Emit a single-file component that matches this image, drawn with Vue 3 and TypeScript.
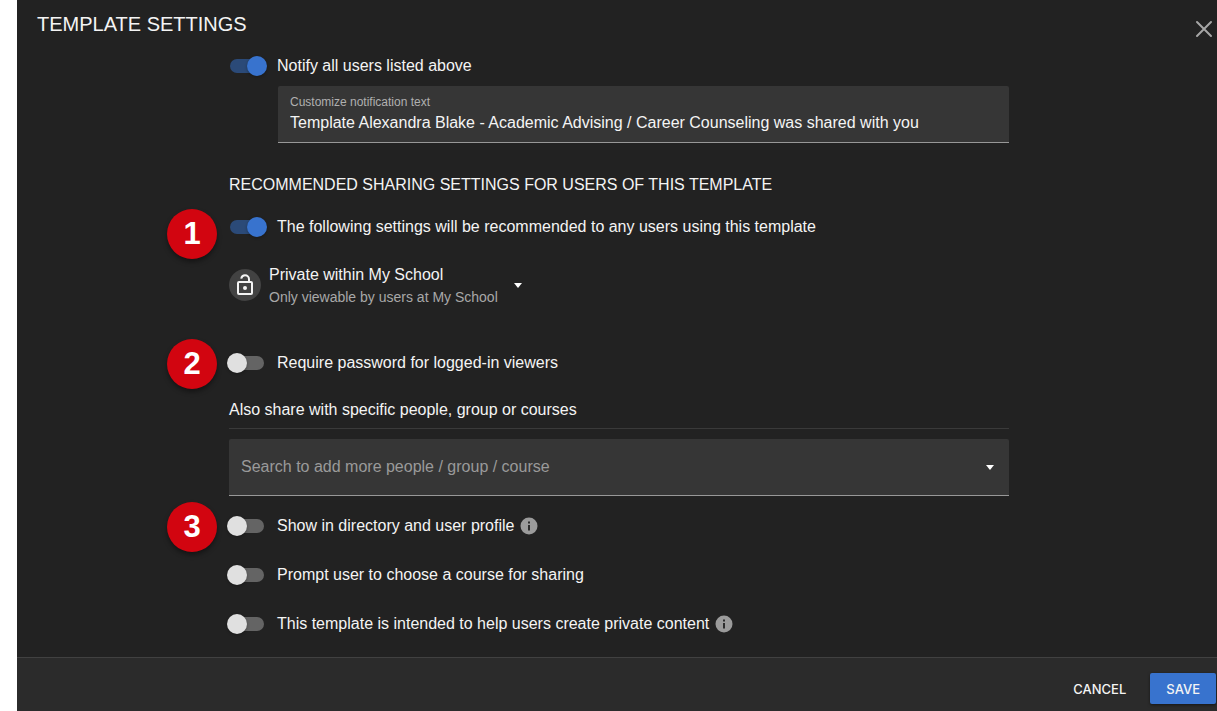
<script setup lang="ts">
import { ref } from 'vue'

interface Option {
  id: string
  label: string
  on: boolean
  hint?: string
  marker?: string
}

const notify = ref(true)
const notificationText = ref(
  'Template Alexandra Blake - Academic Advising / Career Counseling was shared with you',
)
const recommend = ref(true)
const requirePassword = ref(false)
const search = ref('')

const options = ref<Option[]>([
  { id: 'directory', label: 'Show in directory and user profile', on: false, hint: 'About directory visibility', marker: '3' },
  { id: 'prompt', label: 'Prompt user to choose a course for sharing', on: false },
  { id: 'private', label: 'This template is intended to help users create private content', on: false, hint: 'About private content' },
])
</script>

<template>
  <div class="page">
    <section class="dialog" role="dialog" aria-labelledby="dialog-title">
      <header class="header">
        <h1 id="dialog-title" class="title">TEMPLATE SETTINGS</h1>
        <button class="close" type="button" aria-label="Close">
          <svg width="18" height="18" viewBox="0 0 18 18" aria-hidden="true">
            <path d="M2 2l14 14M16 2L2 16" fill="none" stroke="currentColor" stroke-width="2" stroke-linecap="round" />
          </svg>
        </button>
      </header>

      <main class="content">
        <div class="row">
          <input id="notify" v-model="notify" class="switch" type="checkbox" />
          <label for="notify">Notify all users listed above</label>
        </div>
        <div class="field field-nested">
          <label class="field-label" for="notification-text">Customize notification text</label>
          <input id="notification-text" v-model="notificationText" class="field-input" type="text" />
        </div>

        <h2 class="heading">RECOMMENDED SHARING SETTINGS FOR USERS OF THIS TEMPLATE</h2>
        <div class="row">
          <span class="marker marker-low">1</span>
          <input id="recommend" v-model="recommend" class="switch" type="checkbox" />
          <label for="recommend">The following settings will be recommended to any users using this template</label>
        </div>

        <button class="privacy" type="button" aria-haspopup="menu">
          <span class="privacy-icon">
            <svg width="24" height="24" viewBox="0 0 24 24" aria-hidden="true">
              <rect x="5" y="9" width="14" height="12" rx="1" fill="none" stroke="currentColor" stroke-width="2" />
              <path d="M8.2 5.6C8.6 3.6 10 2.2 12 2.2c2.3 0 4 1.7 4 4V9" fill="none" stroke="currentColor" stroke-width="2" />
              <circle cx="12" cy="15" r="2" fill="currentColor" />
            </svg>
          </span>
          <span class="privacy-text">
            <span class="privacy-name">Private within My School</span>
            <span class="privacy-note">Only viewable by users at My School</span>
          </span>
          <svg class="arrow" width="10" height="5" viewBox="0 0 10 5" aria-hidden="true">
            <path d="M1 0h8L5 5z" fill="currentColor" />
          </svg>
        </button>

        <div class="row">
          <span class="marker">2</span>
          <input id="password" v-model="requirePassword" class="switch" type="checkbox" />
          <label for="password">Require password for logged-in viewers</label>
        </div>

        <label class="share-label" for="share-search">Also share with specific people, group or courses</label>
        <div class="field field-search">
          <input
            id="share-search"
            v-model="search"
            class="field-input"
            type="text"
            role="combobox"
            aria-expanded="false"
            placeholder="Search to add more people / group / course"
          />
          <button class="open" type="button" aria-label="Open list">
            <svg class="arrow" width="10" height="5" viewBox="0 0 10 5" aria-hidden="true">
              <path d="M1 0h8L5 5z" fill="currentColor" />
            </svg>
          </button>
        </div>

        <div class="options">
          <div v-for="option in options" :key="option.id" class="row">
            <span v-if="option.marker" class="marker">{{ option.marker }}</span>
            <input :id="option.id" v-model="option.on" class="switch" type="checkbox" />
            <label :for="option.id">{{ option.label }}</label>
            <button v-if="option.hint" class="hint" type="button" :aria-label="option.hint">
              <svg width="18" height="18" viewBox="0 0 18 18" aria-hidden="true">
                <circle cx="9" cy="9" r="8.5" fill="#9b9b9b" />
                <path d="M8 4.6h2v2H8zM8 8h2v5.4H8z" fill="#2c2c2c" />
              </svg>
            </button>
          </div>
        </div>
      </main>

      <footer class="footer">
        <button class="button" type="button">CANCEL</button>
        <button class="button button-primary" type="button">SAVE</button>
      </footer>
    </section>
  </div>
</template>

<style>
body {
  margin: 0;
  background: #fff;
}
</style>

<style scoped>
.page {
  box-sizing: border-box;
  min-height: 100vh;
  padding-left: 17px;
  display: flex;
  font-family: "Helvetica Neue", "Liberation Sans", Arial, sans-serif;
  font-size: 16px;
  line-height: 24px;
  color: #f4f4f4;
}

.page button,
.page input {
  font-family: inherit;
  color: inherit;
}

.page button {
  border: 0;
  background: none;
  padding: 0;
  cursor: pointer;
}

.dialog {
  flex: 1;
  min-width: 0;
  display: flex;
  flex-direction: column;
  background: #222;
}

.header {
  display: flex;
  justify-content: space-between;
  align-items: flex-start;
  padding: 12px 4px 0 20px;
}

.title {
  margin: 0;
  font-size: 20px;
  line-height: 24px;
  font-weight: 400;
}

.page .close {
  display: flex;
  margin-top: 8px;
  color: #a6a6a6;
}

.content {
  flex: 1;
  box-sizing: border-box;
  width: 100%;
  max-width: 784px;
  margin: 0 auto;
  padding: 14px 0 10px 4px;
}

.row {
  position: relative;
  display: flex;
  align-items: center;
  height: 28px;
}

.switch {
  appearance: none;
  position: relative;
  flex: none;
  width: 34px;
  height: 14px;
  margin: 0 13px 0 1px;
  border-radius: 7px;
  background: #646464;
  cursor: pointer;
}

.switch::before {
  content: "";
  position: absolute;
  top: -3px;
  left: -3px;
  width: 20px;
  height: 20px;
  border-radius: 50%;
  background: #e0e0e0;
  box-shadow: 0 1px 3px rgba(0, 0, 0, 0.3);
}

.switch:checked {
  background: #2b4a78;
}

.switch:checked::before {
  left: 17px;
  background: #3873ce;
}

.marker {
  position: absolute;
  top: -10px;
  left: -62px;
  width: 50px;
  height: 50px;
  border-radius: 50%;
  background: #d20510;
  box-shadow: 0 3px 5px rgba(0, 0, 0, 0.4);
  color: #fff;
  font-size: 31px;
  line-height: 50px;
  font-weight: 700;
  text-align: center;
}

.marker-low {
  top: -4px;
}

.field {
  box-sizing: border-box;
  height: 57px;
  background: #363636;
  border-bottom: 1px solid #989898;
  border-radius: 2px 2px 0 0;
}

.field-nested {
  margin: 6px 0 0 49px;
  padding: 7px 12px;
}

.field-label {
  display: block;
  font-size: 12px;
  line-height: 18px;
  color: #b0b0b0;
}

.field-input {
  box-sizing: border-box;
  display: block;
  width: 100%;
  height: 24px;
  padding: 0;
  border: 0;
  outline: 0;
  background: none;
  font-size: 16px;
}

.field-input::placeholder {
  color: #9a9a9a;
  opacity: 1;
}

.heading {
  margin: 30px 0 16px;
  font-size: 16px;
  line-height: 24px;
  font-weight: 400;
}

.privacy {
  display: flex;
  align-items: center;
  margin: 22px 0 42px;
  text-align: left;
}

.privacy-icon {
  display: grid;
  place-items: center;
  width: 32px;
  height: 32px;
  margin-right: 8px;
  border-radius: 50%;
  background: #424242;
}

.privacy-text {
  display: flex;
  flex-direction: column;
}

.privacy-name {
  font-size: 16px;
  line-height: 24px;
}

.privacy-note {
  font-size: 14px;
  line-height: 20px;
  color: #a8a8a8;
}

.arrow {
  display: block;
  color: #fff;
}

.privacy .arrow {
  margin-left: 15px;
}

.share-label {
  display: block;
  margin: 21px 0 10px;
  padding-bottom: 6px;
  border-bottom: 1px solid #3a3a3a;
}

.field-search {
  display: flex;
  align-items: center;
  padding: 0 12px;
}

.page .open {
  padding: 8px 2px;
}

.options {
  display: flex;
  flex-direction: column;
  gap: 21px;
  padding-top: 16px;
}

.hint {
  display: flex;
  margin-left: 6px;
}

.footer {
  display: flex;
  justify-content: flex-end;
  align-items: center;
  gap: 8px;
  padding: 15px 1px 7px;
  border-top: 1px solid #414141;
  background: #2b2b2b;
}

.page .button {
  height: 31px;
  padding: 0 16px;
  border-radius: 2px;
  font-family: "Helvetica Neue", Inter, sans-serif;
  font-size: 13px;
  font-weight: 500;
}

.page .button-primary {
  background: #3873ce;
  box-shadow: 0 1px 3px rgba(0, 0, 0, 0.5);
}
</style>
